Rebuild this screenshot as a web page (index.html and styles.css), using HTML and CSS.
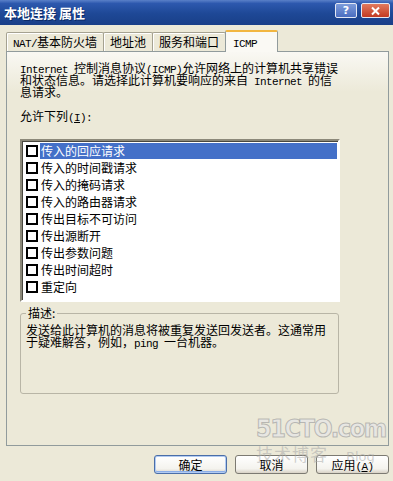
FILE: index.html
```html
<!DOCTYPE html>
<html>

<head>
  <meta http-equiv="Content-Type" content="text/html; charset=utf-8" />
  <title>本地连接 属性</title>
  <link rel="stylesheet" href="styles.css">
</head>

<body>
  <div id="window">
    <div class="titlebar">
      <span class="title">本地连接 属性</span>
      <div class="caption-btns">
        <span class="cbtn help">?</span>
        <span class="cbtn close">
          <svg width="11" height="10" viewBox="0 0 11 10">
            <path d="M2 1.5 L9 8.5 M9 1.5 L2 8.5" stroke="#fff" stroke-width="2" fill="none" />
          </svg>
        </span>
      </div>
    </div>

    <div class="tabs">
      <span class="tab"><span class="en">NAT/</span>基本防火墙</span>
      <span class="tab">地址池</span>
      <span class="tab">服务和端口</span>
      <span class="tab selected"><span class="en">ICMP</span></span>
    </div>

    <div class="panel">
      <p class="intro"><span class="en">Internet </span>控制消息协议<span class="en">(ICMP)</span>允许网络上的计算机共享错误<br>和状态信息。请选择此计算机要响应的来自<span class="en"> Internet </span>的信<br>息请求。</p>
      <p class="caption">允许下列<span class="en">(<u>I</u>):</span></p>

      <ul class="list">
        <li class="item active"><span class="check"></span><span class="name">传入的回应请求</span></li>
        <li class="item"><span class="check"></span><span class="name">传入的时间戳请求</span></li>
        <li class="item"><span class="check"></span><span class="name">传入的掩码请求</span></li>
        <li class="item"><span class="check"></span><span class="name">传入的路由器请求</span></li>
        <li class="item"><span class="check"></span><span class="name">传出目标不可访问</span></li>
        <li class="item"><span class="check"></span><span class="name">传出源断开</span></li>
        <li class="item"><span class="check"></span><span class="name">传出参数问题</span></li>
        <li class="item"><span class="check"></span><span class="name">传出时间超时</span></li>
        <li class="item"><span class="check"></span><span class="name">重定向</span></li>
      </ul>

      <fieldset class="desc">
        <legend>描述:</legend>
        <p>发送给此计算机的消息将被重复发送回发送者。这通常用<br>于疑难解答，例如，<span class="en">ping </span>一台机器。</p>
      </fieldset>
    </div>

    <div class="buttons">
      <span class="btn default">确定</span>
      <span class="btn">取消</span>
      <span class="btn">应用<span class="en">(<u>A</u>)</span></span>
    </div>
  </div>

  <!-- site watermark stamped over the screenshot -->
  <div class="watermark">
    <div class="wm-big">51CTO.com</div>
    <div class="wm-small">技术博客<span class="wm-blog">Blog</span></div>
  </div>
</body>

</html>
```

FILE: styles.css
```css
body {
  margin: 0;
  width: 393px;
  height: 481px;
  overflow: hidden;
  position: relative;
  background: #ECE9D8;
  font-family: "Noto Sans CJK SC", sans-serif;
  font-size: 12px;
  color: #000;
}

.en {
  font-family: "Liberation Mono", monospace;
  font-size: 11px;
  line-height: 8px;
  letter-spacing: -0.6px;
}

/* title bar */
.titlebar {
  height: 25px;
  display: flex;
  align-items: center;
  justify-content: space-between;
  padding: 0 3px 0 4px;
  background: linear-gradient(#5A80C8 0%, #2D58AE 14%, #1E4896 55%, #193F88 100%);
}

.title {
  color: #fff;
  font-weight: bold;
  font-size: 13px;
  text-shadow: 1px 1px 0 #0C2A66;
}

.caption-btns {
  display: flex;
  gap: 4px;
  margin-top: -4px;
}

.cbtn {
  height: 13px;
  border: 1px solid #E4E8F4;
  border-radius: 2px;
  display: flex;
  align-items: center;
  justify-content: center;
  color: #fff;
  font-family: "DejaVu Sans", sans-serif;
  font-weight: bold;
  font-size: 11px;
}

.help {
  width: 20px;
  background: linear-gradient(#7D9CDB, #4A6DC0);
}

.close {
  width: 27px;
  background: linear-gradient(#E27A5E, #C23A22);
}

/* tabs */
.tabs {
  display: flex;
  align-items: flex-end;
  height: 21px;
  margin-top: 5px;
  padding-left: 6px;
  position: relative;
  z-index: 1;
}

.tab {
  height: 18px;
  line-height: 18px;
  padding: 0 6px;
  white-space: nowrap;
  border: 1px solid #A5A291;
  border-bottom: none;
  box-shadow: inset 1px 1px 0 #fff;
  background: #ECE9D8;
  border-radius: 2px 2px 0 0;
  margin-right: -1px;
}

.tab.selected {
  width: 38px;
  height: 20px;
  line-height: 20px;
  margin-bottom: -1px;
  padding: 0 6px 0 7px;
  border-color: #919B9C;
  border-top: 2px solid #F2B640;
  box-shadow: none;
  background: #FAF9F4;
}

/* tab page */
.panel {
  margin: 0 4px 0 6px;
  height: 395px;
  box-sizing: border-box;
  border: 1px solid #919B9C;
  background: linear-gradient(#F9F8F3, #ECE9D8 40px);
  padding: 10px 0 0 13px;
}

.intro {
  margin: 0;
  line-height: 12px;
}

.caption {
  margin: 12px 0 0;
  line-height: 12px;
}

.list {
  list-style: none;
  margin: 17px 0 0;
  padding: 1px 0 0;
  width: 320px;
  height: 163px;
  box-sizing: border-box;
  background: #fff;
  border: 2px solid;
  border-color: #8C897A #fff #fff #8C897A;
  box-shadow: inset 1px 1px 0 #4A4840;
}

.item {
  display: flex;
  align-items: center;
  height: 17px;
}

.check {
  width: 8px;
  height: 8px;
  border: 2px solid #000;
  margin-left: 4px;
  margin-right: 2px;
  background: #fff;
}

.name {
  flex: 1;
  padding-left: 1px;
  margin-right: 1px;
  line-height: 16px;
}

.item.active .name {
  background: #4470C8;
  color: #fff;
}

.desc {
  margin: 5px 0 0;
  width: 319px;
  height: 87px;
  box-sizing: border-box;
  padding: 0 5px;
  border: 1px solid #B8B5A6;
  border-radius: 3px;
}

.desc legend {
  padding: 0 2px;
  line-height: 12px;
}

.desc p {
  margin: 5px 0 0;
  line-height: 12px;
}

/* dialog buttons */
.buttons {
  display: flex;
  justify-content: flex-end;
  gap: 8px;
  margin-top: 9px;
  padding-right: 4px;
}

.btn {
  width: 71px;
  height: 17px;
  line-height: 17px;
  text-align: center;
  border: 1px solid #7C7A72;
  border-radius: 3px;
  background: linear-gradient(#FFFFFF, #F4F3EE 75%, #D8D2C6);
}

.btn.default {
  border-color: #4A6EA8;
  box-shadow: inset 0 0 0 1px #B2CBF2, inset 0 -1px 0 1px #8BAEE8;
}

/* watermark */
.watermark {
  position: absolute;
  left: 256px;
  top: 414px;
  width: 130px;
  white-space: nowrap;
  pointer-events: none;
}

.wm-big {
  font-family: "DejaVu Sans Condensed", sans-serif;
  font-weight: bold;
  font-size: 25px;
  line-height: 30px;
  letter-spacing: -1.4px;
  color: rgba(230, 230, 230, 0.75);
  -webkit-text-stroke: 1px rgba(150, 150, 150, 0.6);
}

.wm-small {
  font-size: 17px;
  line-height: 20px;
  color: rgba(170, 170, 170, 0.55);
  letter-spacing: 1px;
}

.wm-blog {
  font-family: "DejaVu Sans", sans-serif;
  font-size: 13px;
  margin-left: 18px;
  letter-spacing: 0;
}
```
